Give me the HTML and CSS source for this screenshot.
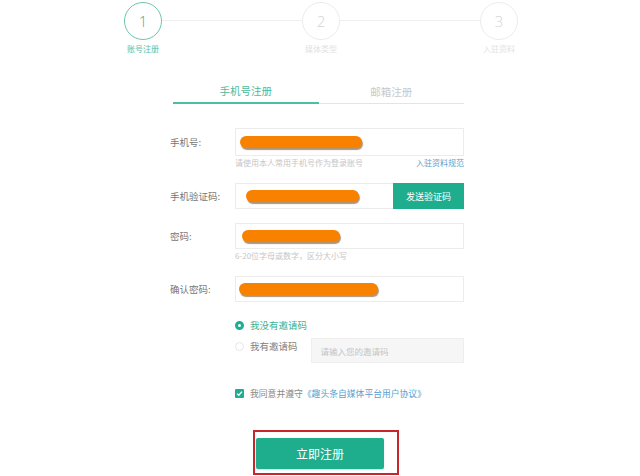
FILE: index.html
```html
<!DOCTYPE html>
<html lang="zh">
<head>
<meta charset="utf-8">
<link rel="stylesheet" href="styles.css">
</head>
<body>
<div class="steps">
  <div class="step active"><div class="circle">1</div><div class="step-label">账号注册</div></div>
  <div class="line"></div>
  <div class="step"><div class="circle">2</div><div class="step-label">媒体类型</div></div>
  <div class="line"></div>
  <div class="step"><div class="circle">3</div><div class="step-label">入驻资料</div></div>
</div>

<div class="form">
  <div class="tabs">
    <div class="tab active">手机号注册</div>
    <div class="tab">邮箱注册</div>
  </div>

  <div class="row row-first">
    <div class="label">手机号:</div>
    <div class="input"><span class="scribble s1"></span></div>
  </div>
  <div class="hint-row">
    <span class="hint">请使用本人常用手机号作为登录账号</span>
    <span class="link">入驻资料规范</span>
  </div>

  <div class="row row-gap">
    <div class="label">手机验证码:</div>
    <div class="input input-code"><span class="scribble s2"></span><span class="send">发送验证码</span></div>
  </div>

  <div class="row row-gap2">
    <div class="label">密码:</div>
    <div class="input"><span class="scribble s3"></span></div>
  </div>
  <div class="hint-row">
    <span class="hint">6-20位字母或数字，区分大小写</span>
  </div>

  <div class="row row-gap2">
    <div class="label">确认密码:</div>
    <div class="input"><span class="scribble s4"></span></div>
  </div>

  <div class="radios">
    <div class="radio-line">
      <span class="radio checked"></span><span class="radio-text on">我没有邀请码</span>
    </div>
    <div class="radio-line second">
      <span class="radio"></span><span class="radio-text">我有邀请码</span>
      <div class="invite">请输入您的邀请码</div>
    </div>
  </div>

  <div class="agree">
    <span class="checkbox"><svg width="7" height="7" viewBox="0 0 7 7"><path d="M1 3.6 L2.8 5.3 L6 1.6" fill="none" stroke="#fff" stroke-width="1.3"/></svg></span>
    <span class="agree-text">我同意并遵守<span class="blue">《趣头条自媒体平台用户协议》</span></span>
  </div>

  <div class="mark">
    <div class="submit">立即注册</div>
  </div>
</div>
</body>
</html>
```

FILE: styles.css
```css
* { box-sizing: border-box; }
html, body { margin: 0; padding: 0; background: #fff; }
body {
  width: 640px;
  height: 476px;
  overflow: hidden;
  font-family: "Noto Sans CJK SC", "Noto Sans", sans-serif;
  color: #666;
}

/* steps */
.steps {
  display: flex;
  justify-content: center;
  padding-top: 2px;
  padding-left: 2px;
  height: 56px;
}
.step {
  width: 38px;
  display: flex;
  flex-direction: column;
  align-items: center;
}
.circle {
  width: 38px;
  height: 38px;
  border: 1px solid #ececec;
  border-radius: 50%;
  display: flex;
  align-items: center;
  justify-content: center;
  font-family: "Open Sans", sans-serif;
  font-size: 15px;
  font-weight: 300;
  color: #d4d4d4;
}
.step.active .circle { border-color: #6cc7ac; color: #58a992; }
.step-label {
  margin-top: 3px;
  font-size: 8px;
  line-height: 12px;
  white-space: nowrap;
  color: #e2e2e2;
}
.step.active .step-label { color: #5bbd9f; }
.line {
  width: 140px;
  height: 1px;
  margin-top: 18px;
  background: #efefef;
}

/* form */
.form {
  margin-left: 170px;
  width: 294px;
}
.tabs {
  display: flex;
  margin-left: 3px;
  margin-top: 27px;
  width: 291px;
  align-items: flex-end;
}
.tab {
  flex: 1;
  text-align: center;
  font-size: 10.5px;
  line-height: 16px;
  padding-bottom: 3px;
  color: #c8c8c8;
  border-bottom: 1px solid #e4e4e4;
}
.tab.active {
  color: #4dbb9b;
  border-bottom: 2px solid #4cc09e;
}

.row {
  display: grid;
  grid-template-columns: 65px 229px;
  align-items: center;
}
.row-first { margin-top: 24px; }
.row-gap { margin-top: 14px; }
.row-gap2 { margin-top: 14px; }
.label {
  font-size: 9.5px;
  color: #777;
  white-space: nowrap;
}
.input {
  height: 26px;
  border: 1px solid #ececec;
  display: flex;
  align-items: center;
  padding-left: 4px;
}
.row-first .input { height: 28px; }
.input-code { justify-content: space-between; padding-right: 0; border-right: 0; }
.scribble {
  display: block;
  height: 12px;
  border-radius: 6px;
  background: #f98100;
  box-shadow: 1px 2px 1px rgba(110, 60, 10, 0.55);
}
.s1 { width: 122px; }
.s2 { width: 113px; margin-left: 6px; }
.s3 { width: 98px; margin-left: 2px; }
.s4 { width: 139px; margin-left: -1px; }
.send {
  align-self: stretch;
  margin: -1px 0;
  width: 71px;
  background: #1eae8e;
  color: #fff;
  font-size: 9px;
  display: flex;
  align-items: center;
  justify-content: center;
}

.hint-row {
  margin-left: 65px;
  margin-top: 1px;
  display: flex;
  justify-content: space-between;
  font-size: 8px;
  line-height: 12px;
}
.hint { color: #c6c6c6; }
.link { color: #5a9fd0; }

.radios {
  margin-left: 65px;
  margin-top: 16px;
}
.radio-line {
  display: flex;
  align-items: flex-start;
}
.radio-line.second { margin-top: 7px; }
.radio {
  width: 9px;
  height: 9px;
  border-radius: 50%;
  border: 1px solid #e6e6e6;
  margin-top: 2.5px;
  flex: none;
}
.radio.checked {
  border: 3px solid #1fae8f;
  background: #fff;
}
.radio-text {
  margin-left: 6px;
  font-size: 9.5px;
  line-height: 14px;
  color: #808080;
  white-space: nowrap;
}
.radio-text.on { color: #3bb192; }
.invite {
  margin-left: 13px;
  width: 153px;
  height: 25px;
  margin-top: -1px;
  background: #f6f6f6;
  border: 1px solid #eeeeee;
  font-size: 8.5px;
  color: #c4c4c4;
  display: flex;
  align-items: center;
  padding-left: 9px;
}

.agree {
  margin-left: 65px;
  margin-top: 23px;
  display: flex;
  align-items: center;
  height: 14px;
}
.checkbox {
  width: 9px;
  height: 9px;
  background: #1fae8f;
  border-radius: 1px;
  display: flex;
  align-items: center;
  justify-content: center;
  flex: none;
}
.agree-text {
  margin-left: 6px;
  font-size: 8.8px;
  color: #8a8a8a;
  white-space: nowrap;
}
.blue { color: #5a9fd0; }

.mark {
  margin-top: 30px;
  margin-left: 83px;
  width: 146px;
  height: 45px;
  border: 2px solid #c8262c;
  padding: 6px 13px 3px 1px;
}
.submit {
  height: 31px;
  background: #1eae8e;
  border-radius: 2px;
  color: #fff;
  font-size: 12px;
  display: flex;
  align-items: center;
  justify-content: center;
  box-shadow: 0 1px 2px rgba(0,0,0,0.15);
}
```
